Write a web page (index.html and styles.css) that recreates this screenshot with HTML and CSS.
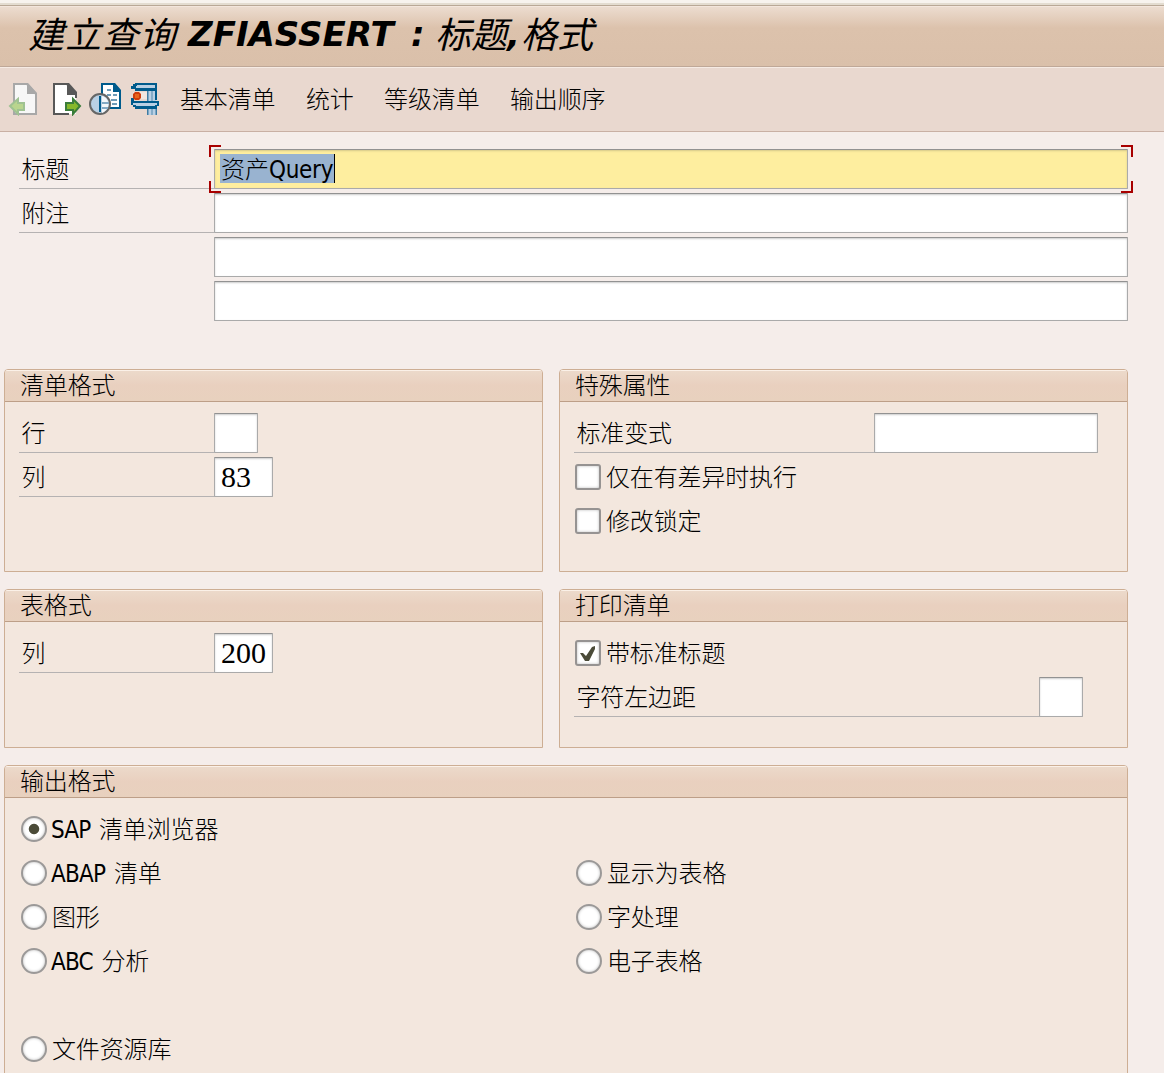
FILE: index.html
```html
<!DOCTYPE html>
<html lang="zh-CN">
<head>
<meta charset="utf-8">
<title>建立查询 ZFIASSERT：标题,格式</title>
<link rel="stylesheet" href="styles.css">
</head>
<body>
<header class="titlebar">
  <h1><span class="t-cjk">建立查询</span><span class="t-lat">ZFIASSERT</span><span class="t-colon">:</span><span class="t-cjk2">标题</span><span class="t-comma">,</span><span class="t-cjk2">格式</span></h1>
</header>
<nav class="toolbar">
  <svg class="icon" width="32" height="34" viewBox="7 82 32 34"><path d="M14 84h13l9 10v20H14z" fill="#f7f7f7" stroke="#a8a8a8" stroke-width="2"/><path d="M27 83h1l9 10v1H27z" fill="#a8a8a8"/><path d="M10 106l8-7v4h6v7h-6v4z" fill="#b9d58e" stroke="#9fc292" stroke-width="2"/></svg>
  <svg class="icon" width="32" height="34" viewBox="51 82 32 34"><path d="M54 84h13l9 10v20H54z" fill="#fff"/><path d="M76 98V94L67 84H54v30h15" fill="none" stroke="#585858" stroke-width="2"/><path d="M67 83h2l8 9v3H67z" fill="#585858"/><path d="M80 106l-7-7v4h-7v7h7v4z" fill="#86b82b" stroke="#3b7d3b" stroke-width="2"/></svg>
  <svg class="icon" width="34" height="34" viewBox="88 82 34 34"><path d="M102 84h12l6 7v17h-18z" fill="#fff" stroke="#005b8c" stroke-width="2"/><path d="M113 83h2l6 7v2h-8z" fill="#005b8c"/><path d="M107 90h4M107 95h4M113 95h4M111 100h6M112 104h5" stroke="#6f9cb8" stroke-width="2"/><circle cx="100" cy="104" r="10" fill="#b9d0e4" stroke="#666" stroke-width="2"/><path d="M102 96c8 2 9 13 0 17z" fill="#f4f7fa"/><path d="M102 103h7M102 108h6" stroke="#83a9c4" stroke-width="2"/><path d="M100 96v16" stroke="#005b8c" stroke-width="2"/></svg>
  <svg class="icon" width="32" height="34" viewBox="129 82 32 34"><path d="M133 92h14v7h-14z" fill="#f1e6e0"/><path d="M148 91h8v24h-8z" fill="#b9d0e4"/><path d="M151 91h2v24h-2z" fill="#85acc8"/><path d="M147 91h1.500v10H147zM147 108h1.500v7H147zM155.500 108h1.500v7h-1.500z" fill="#3f7ca3"/><path d="M135 83h22v17h-2v-9h-20v-2h-4v-3h2v-2h2z" fill="#005b8c"/><path d="M137 85h18v3h-19v-2h1z" fill="#b9d0e4"/><path d="M131 98h3v3h25v5h-2v3h-22v-2h-2v-2h-2z" fill="#005b8c"/><path d="M133 103h24v2h-2v1h-19v-1h-3z" fill="#b9d0e4"/><path d="M135 92h4l2 2v4l-2 2h-4l-2-2v-4z" fill="#cf3d0c"/><path d="M135 94h4v4h-4z" fill="#e8641c"/></svg>
  <span class="tool">基本清单</span><span class="tool">统计</span><span class="tool">等级清单</span><span class="tool">输出顺序</span>
</nav>
<main class="content">
  <section class="heading-form">
    <div class="row"><label class="label">标题</label><div class="field active"><span class="selection">资产<span class="lat query">Query</span></span><i class="corner tl"></i><i class="corner tr"></i><i class="corner bl"></i><i class="corner br"></i></div></div>
    <div class="row"><label class="label">附注</label><div class="field"></div></div>
    <div class="row"><span class="spacer"></span><div class="field"></div></div>
    <div class="row"><span class="spacer"></span><div class="field"></div></div>
  </section>
  <div class="panels">
    <section class="panel">
      <h2>清单格式</h2>
      <div class="panel-body">
        <div class="row"><label class="label">行</label><div class="field w44"></div></div>
        <div class="row"><label class="label">列</label><div class="field w59">83</div></div>
      </div>
    </section>
    <section class="panel">
      <h2>特殊属性</h2>
      <div class="panel-body">
        <div class="row"><label class="label w300">标准变式</label><div class="field w224"></div></div>
        <div class="row option"><span class="check"></span>仅在有差异时执行</div>
        <div class="row option"><span class="check"></span>修改锁定</div>
      </div>
    </section>
    <section class="panel">
      <h2>表格式</h2>
      <div class="panel-body">
        <div class="row"><label class="label">列</label><div class="field w59">200</div></div>
      </div>
    </section>
    <section class="panel">
      <h2>打印清单</h2>
      <div class="panel-body">
        <div class="row option"><span class="check"><svg width="18" height="18" viewBox="0 0 18 18"><path d="M1 9h3l3 3 6-9 3-1v3l-6 12H6z" fill="#4b4b38"/></svg></span>带标准标题</div>
        <div class="row"><label class="label w465">字符左边距</label><div class="field w44"></div></div>
      </div>
    </section>
    <section class="panel wide">
      <h2>输出格式</h2>
      <div class="panel-body choices">
        <div class="row option"><span class="radio on"></span><span class="lat sap">SAP</span>清单浏览器</div><div></div>
        <div class="row option"><span class="radio"></span><span class="lat abap">ABAP</span>清单</div>
        <div class="row option"><span class="radio"></span>显示为表格</div>
        <div class="row option"><span class="radio"></span>图形</div>
        <div class="row option"><span class="radio"></span>字处理</div>
        <div class="row option"><span class="radio"></span><span class="lat abc">ABC</span>分析</div>
        <div class="row option"><span class="radio"></span>电子表格</div>
        <div class="row blank"></div>
        <div class="row option"><span class="radio"></span>文件资源库</div>
      </div>
    </section>
  </div>
</main>
</body>
</html>
```
FILE: styles.css
```css
* { box-sizing: border-box; }
body {
  margin: 0;
  height: 1073px;
  overflow: hidden;
  background: #f5edea;
  color: #000;
  font: 300 24px/38px "Noto Sans CJK SC", sans-serif;
  letter-spacing: -0.15px;
  white-space: nowrap;
}
.titlebar {
  height: 67px;
  padding: 7px 0 0 28px;
  border-bottom: 1px solid #bfa898;
  background:
    linear-gradient(#f7f3ee 0 3px, #e3dcd0 3px 5px, #b9a896 5px 6px, #f3e6dc 6px 7px, transparent 7px),
    linear-gradient(#ecdccf 7px, #dcc2ac 28px, #dac0aa 100%);
}
.titlebar h1 {
  display: flex;
  margin: 0;
  font-size: 36px;
  font-weight: 400;
  line-height: 51px;
  font-style: italic;
}
.t-cjk { width: 160px; letter-spacing: 1.2px; }
.t-cjk2 { width: 72px; letter-spacing: 0; }
.t-lat, .t-colon, .t-comma {
  font-family: "DejaVu Sans", sans-serif;
  font-weight: 700;
  font-size: 34px;
  line-height: 55px;
}
.t-lat { width: 223px; letter-spacing: 0; }
.t-colon { width: 24px; }
.t-comma { width: 14px; }
.toolbar {
  display: flex;
  align-items: center;
  height: 65px;
  padding: 0 0 1px 7px;
  background: #e9d8cf;
  border-top: 1px solid #f6ebe4;
  border-bottom: 1px solid #c9b0a4;
}
.icon { flex: none; margin-right: 9px; }
.icon:nth-child(1) { margin-right: 12px; }
.icon:nth-child(2) { margin-right: 5px; }
.icon:nth-child(3) { margin-right: 7px; }
.icon:nth-child(4) { margin-right: 19px; }
.tool { margin-right: 30.5px; padding-bottom: 2px; }
.content { padding-top: 17px; }
.row { display: flex; height: 40px; margin-bottom: 4px; }
.label { flex: none; width: 195px; padding-left: 2.5px; border-bottom: 1px solid #b5b2b2; }
.spacer { flex: none; width: 195px; }
.field {
  height: 40px;
  border: 1px solid #aaa;
  border-top-color: #929292;
  border-radius: 1px;
  background: #fff;
  box-shadow: inset 0 1px 2px #ccc;
  padding-left: 6px;
  font: 30px/39px "Liberation Serif", serif;
  letter-spacing: 0;
}
.heading-form { padding-left: 19px; height: 220px; }
.heading-form .field { width: 914px; }
.field.active { position: relative; background: #feee9f; padding: 4px 0 0 5px; box-shadow: inset 0 1px 2px #d5c88a; }
.selection {
  display: flex;
  width: 115px;
  height: 29px;
  padding-left: 1px;
  border-right: 1px solid #000;
  background: #99b3d0;
  font: 300 24px/28px "Noto Sans CJK SC", sans-serif;
}
.lat { font-family: "DejaVu Sans Condensed", "DejaVu Sans", sans-serif; font-stretch: condensed; font-weight: 400; flex: none; padding-top: 2px; }
.query { font-size: 24px; letter-spacing: -0.3px; line-height: 30px; padding-top: 1px; }
.corner { position: absolute; width: 12px; height: 12px; border: 0 solid #a80000; }
.tl { left: -6px; top: -5px; border-width: 2px 0 0 2px; }
.tr { right: -6px; top: -5px; border-width: 2px 2px 0 0; }
.bl { left: -6px; bottom: -5px; border-width: 0 0 2px 2px; }
.br { right: -6px; bottom: -5px; border-width: 0 2px 2px 0; }
.panels {
  display: grid;
  grid-template-columns: 539px 569px;
  grid-template-rows: 203px 159px 330px;
  column-gap: 16px;
  row-gap: 17px;
  padding-left: 4px;
}
.panel { border: 1px solid #cdae94; border-radius: 4px 4px 0 0; background: #f3e7de; }
.wide { grid-column: 1 / 3; }
.panel h2 {
  height: 32px;
  margin: 0;
  padding-left: 15px;
  border-bottom: 1px solid #bd9f88;
  border-radius: 3px 3px 0 0;
  background: linear-gradient(#fbf1e8 0 1px, transparent 1px), linear-gradient(#ecdacb, #e9d0bf 50%, #e8d1be);
  font-size: 24px;
  font-weight: 300;
  line-height: 27px;
}
.panel-body { padding: 11px 0 0 14px; }
.w44 { width: 44px; }
.w59 { width: 59px; }
.w224 { width: 224px; }
.w300 { width: 300px; }
.w465 { width: 465px; }
.w59 { line-height: 38px; }
.option { padding-left: 1px; }
.check, .radio {
  flex: none;
  width: 26px;
  height: 26px;
  margin: 7px 5px 0 0;
  border: 2px solid #969392;
  background: #fff;
  box-shadow: inset 0 0 3px #bbb;
}
.check { display: grid; place-items: center; border-radius: 3px; }
.radio { border-radius: 50%; border-color: #9b9998; }
.choices .option { padding-left: 2px; }
.radio.on { background: radial-gradient(circle, #4b4b38 4.7px, #fff 5.7px); }
.choices { display: grid; grid-template-columns: 555px 1fr; }
.blank { grid-column: 1 / 3; }
.sap, .abap, .abc { margin-left: -1px; letter-spacing: -0.8px; }
.sap { width: 48px; }
.abap { width: 63px; }
.abc { width: 50.5px; }
```
